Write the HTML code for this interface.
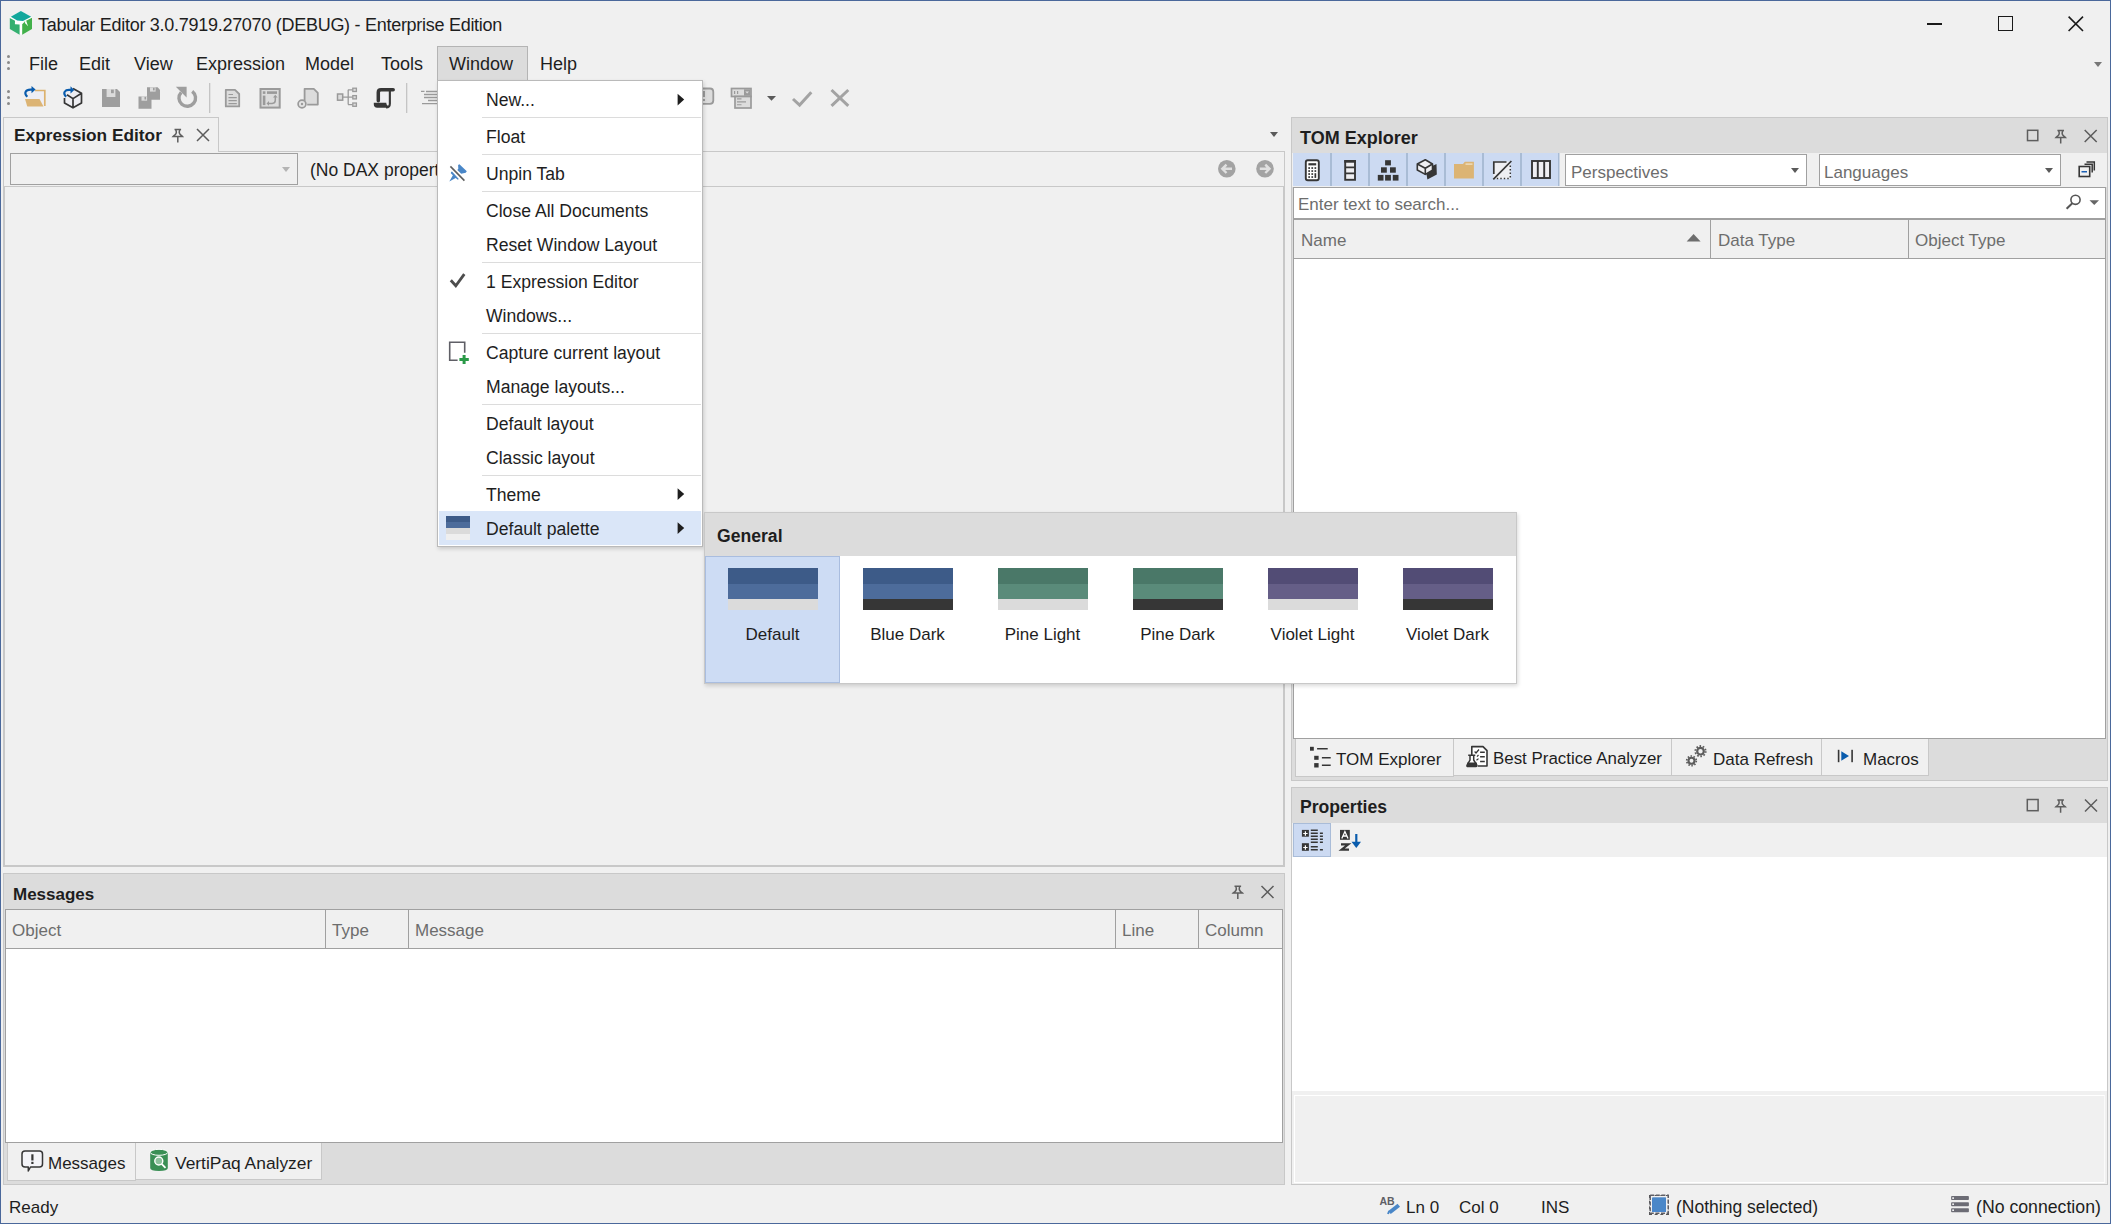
<!DOCTYPE html>
<html><head><meta charset="utf-8">
<style>
*{box-sizing:border-box;margin:0;padding:0}
html,body{width:2111px;height:1224px;overflow:hidden;background:#f0f0f0}
body{font-family:"Liberation Sans",sans-serif;font-size:17px;color:#1e1e1e;position:relative}
.a{position:absolute}
.t{position:absolute;white-space:nowrap;line-height:1}
.b{font-weight:bold}
.g{color:#6d6d6d}
svg{position:absolute;overflow:visible}
.sep{position:absolute;height:1px;background:#dcdcdc}
.mi{position:absolute;left:486px;font-size:17.6px;white-space:nowrap;line-height:1}
.arr{position:absolute;width:0;height:0;border-left:4.5px solid transparent;border-right:4.5px solid transparent;border-top:5px solid #5a5a5a}
.sw{position:absolute;top:568px;width:90px;height:42px}
.sw div{position:absolute;left:0;width:90px}
.pl{position:absolute;top:626px;width:135px;text-align:center;white-space:nowrap;line-height:1;font-size:17px}
.tab{position:absolute;background:#f0f0f0;border-right:1px solid #c8c8c8;border-bottom:1px solid #c8c8c8}
</style></head><body>
<!-- window border -->
<div class="a" style="left:0;top:0;width:2111px;height:1224px;border:1px solid #4a689b"></div>

<!-- ===== title bar ===== -->
<svg style="left:0;top:0" width="40" height="40" viewBox="0 0 40 40">
  <polygon points="20.9,10.9 31.2,16.7 32,17.8 32,28.9 21,34.7 9.8,28.9 9.8,18 10.8,16.7" fill="#fff"/>
  <polygon points="20.9,10.9 31.2,16.7 23,20.9 17.2,20.6 10.8,16.7" fill="#13a89c"/>
  <polygon points="9.8,18 15,20.7 14.9,24.3 19.6,24.4 19.6,34.7 9.8,28.9" fill="#34b070"/>
  <polygon points="22.2,24.3 25.2,21.3 32,17.8 32,28.9 22.2,34.7" fill="#41b04a"/>
  <polygon points="24.4,21.2 26.3,21 28,26.3 25.3,23.2" fill="#fff"/>
</svg>
<div class="t" style="left:38px;top:16px;font-size:18px;letter-spacing:-0.28px">Tabular Editor 3.0.7919.27070 (DEBUG) - Enterprise Edition</div>
<div class="a" style="left:1927px;top:23px;width:15px;height:2px;background:#1a1a1a"></div>
<div class="a" style="left:1998px;top:16px;width:15px;height:15px;border:1.6px solid #1a1a1a"></div>
<svg style="left:2068px;top:16px" width="16" height="16" viewBox="0 0 16 16"><path d="M0.6 0.6L15 15M15 0.6L0.6 15" stroke="#1a1a1a" stroke-width="1.6"/></svg>

<!-- ===== menu bar ===== -->
<svg style="left:7px;top:55px" width="4" height="16"><circle cx="1.5" cy="1.5" r="1.5" fill="#8a8a8a"/><circle cx="1.5" cy="7.5" r="1.5" fill="#8a8a8a"/><circle cx="1.5" cy="13.5" r="1.5" fill="#8a8a8a"/></svg>
<div class="a" style="left:437px;top:46px;width:91px;height:35px;background:#dcdcdc;border:1px solid #b4b4b4;border-bottom:none"></div>
<div class="t" style="left:29px;top:55px;font-size:18px">File</div>
<div class="t" style="left:79px;top:55px;font-size:18px">Edit</div>
<div class="t" style="left:134px;top:55px;font-size:18px">View</div>
<div class="t" style="left:196px;top:55px;font-size:18px">Expression</div>
<div class="t" style="left:305px;top:55px;font-size:18px">Model</div>
<div class="t" style="left:381px;top:55px;font-size:18px">Tools</div>
<div class="t" style="left:449px;top:55px;font-size:18px">Window</div>
<div class="t" style="left:540px;top:55px;font-size:18px">Help</div>
<div class="arr" style="left:2093.5px;top:62px;border-top-color:#777"></div>

<!-- ===== toolbar ===== -->
<svg style="left:7px;top:90px" width="4" height="16"><circle cx="1.5" cy="1.5" r="1.5" fill="#8a8a8a"/><circle cx="1.5" cy="7.5" r="1.5" fill="#8a8a8a"/><circle cx="1.5" cy="13.5" r="1.5" fill="#8a8a8a"/></svg>
<div id="toolbar"></div>

<!-- ===== doc area ===== -->
<div class="a" style="left:3px;top:117px;width:216px;height:35px;border:1px solid #c8c8c8;border-bottom:none;background:#f0f0f0"></div>
<div class="a" style="left:218px;top:151px;width:1067px;height:1px;background:#c8c8c8"></div>
<div class="a" style="left:3px;top:151px;width:1282px;height:716px;border:1px solid #c8c8c8;border-top:none"></div>
<div class="t b" style="left:14px;top:127px;font-size:17.3px">Expression Editor</div>
<div class="arr" style="left:1269.5px;top:132px"></div>
<div class="a" style="left:10px;top:153px;width:288px;height:32px;border:1px solid #a0a0a0"></div>
<div class="arr" style="left:281.5px;top:167px;border-top-color:#b4b4b4"></div>
<div class="a" style="left:4px;top:186px;width:1280px;height:680px;border:1px solid #c8c8c8"></div>
<div class="t" style="left:310px;top:162px;font-size:17.5px">(No DAX property selected)</div>

<!-- ===== messages panel ===== -->
<div class="a" style="left:3px;top:873px;width:1282px;height:312px;border:1px solid #c8c8c8;background:#dcdcdc"></div>
<div class="t b" style="left:13px;top:886px">Messages</div>
<div class="a" style="left:5px;top:909px;width:1278px;height:234px;border:1px solid #a0a0a0;background:#fff"></div>
<div class="a" style="left:6px;top:910px;width:1276px;height:39px;background:#f0f0f0;border-bottom:1px solid #a0a0a0"></div>
<div class="a" style="left:325px;top:910px;width:1px;height:38px;background:#a0a0a0"></div>
<div class="a" style="left:408px;top:910px;width:1px;height:38px;background:#a0a0a0"></div>
<div class="a" style="left:1115px;top:910px;width:1px;height:38px;background:#a0a0a0"></div>
<div class="a" style="left:1198px;top:910px;width:1px;height:38px;background:#a0a0a0"></div>
<div class="t g" style="left:12px;top:922px">Object</div>
<div class="t g" style="left:332px;top:922px">Type</div>
<div class="t g" style="left:415px;top:922px">Message</div>
<div class="t g" style="left:1122px;top:922px">Line</div>
<div class="t g" style="left:1205px;top:922px">Column</div>
<div class="tab" style="left:7px;top:1143px;width:129px;height:38px;border-left:1px solid #c8c8c8"></div>
<div class="tab" style="left:136px;top:1143px;width:186px;height:37px"></div>
<div class="t" style="left:48px;top:1155px">Messages</div>
<div class="t" style="left:175px;top:1155px;font-size:17.4px">VertiPaq Analyzer</div>

<!-- ===== TOM explorer panel ===== -->
<div class="a" style="left:1291px;top:117px;width:817px;height:664px;border:1px solid #c8c8c8;background:#dcdcdc"></div>
<div class="t b" style="left:1300px;top:129px;font-size:18px">TOM Explorer</div>
<div class="a" style="left:1292px;top:153px;width:815px;height:34px;background:#f0f0f0"></div>
<div class="a" style="left:1293px;top:153px;width:266px;height:33px;background:#ccdaf2"></div>
<div class="a" style="left:1565px;top:154px;width:242px;height:32px;border:1px solid #a0a0a0;background:#fff"></div>
<div class="t g" style="left:1571px;top:164px">Perspectives</div>
<div class="arr" style="left:1790.5px;top:168px"></div>
<div class="a" style="left:1819px;top:154px;width:242px;height:32px;border:1px solid #a0a0a0;background:#fff"></div>
<div class="t g" style="left:1824px;top:164px">Languages</div>
<div class="arr" style="left:2044.5px;top:168px"></div>
<div class="a" style="left:1293px;top:187px;width:813px;height:552px;border:1px solid #a0a0a0;background:#fff"></div>
<div class="t g" style="left:1298px;top:196px">Enter text to search...</div>
<div class="a" style="left:1294px;top:218px;width:811px;height:41px;background:#f0f0f0;border-top:2px solid #a0a0a0;border-bottom:1px solid #a0a0a0"></div>
<div class="a" style="left:1710px;top:219px;width:1px;height:39px;background:#a0a0a0"></div>
<div class="a" style="left:1908px;top:219px;width:1px;height:39px;background:#a0a0a0"></div>
<div class="t g" style="left:1301px;top:232px">Name</div>
<div class="t g" style="left:1718px;top:232px">Data Type</div>
<div class="t g" style="left:1915px;top:232px">Object Type</div>
<div class="tab" style="left:1295px;top:739px;width:159px;height:38px;border-left:1px solid #c8c8c8"></div>
<div class="tab" style="left:1454px;top:739px;width:218px;height:37px"></div>
<div class="tab" style="left:1672px;top:739px;width:150px;height:37px"></div>
<div class="tab" style="left:1822px;top:739px;width:107px;height:37px"></div>
<div class="t" style="left:1336px;top:751px">TOM Explorer</div>
<div class="t" style="left:1493px;top:751px;font-size:16.9px">Best Practice Analyzer</div>
<div class="t" style="left:1713px;top:751px">Data Refresh</div>
<div class="t" style="left:1863px;top:751px">Macros</div>

<!-- ===== properties panel ===== -->
<div class="a" style="left:1291px;top:787px;width:817px;height:398px;border:1px solid #c8c8c8;background:#dcdcdc"></div>
<div class="t b" style="left:1300px;top:799px;font-size:17.6px">Properties</div>
<div class="a" style="left:1292px;top:823px;width:815px;height:34px;background:#f0f0f0"></div>
<div class="a" style="left:1293px;top:823px;width:38px;height:34px;background:#ccdaf2;border:1px solid #a9bcd8"></div>
<div class="a" style="left:1292px;top:857px;width:815px;height:234px;background:#fff"></div>
<div class="a" style="left:1292px;top:1091px;width:815px;height:93px;background:#f0f0f0"></div>
<div class="a" style="left:1294px;top:1095px;width:811px;height:88px;border:1px solid #fff;border-right-color:#fafafa"></div>

<!-- ===== status bar ===== -->
<div class="t" style="left:9px;top:1199px">Ready</div>
<div class="t" style="left:1406px;top:1199px">Ln 0</div>
<div class="t" style="left:1459px;top:1199px">Col 0</div>
<div class="t" style="left:1541px;top:1199px">INS</div>
<div class="a" style="left:1649px;top:1195px;width:20px;height:20px;border:1px dashed #555"></div>
<div class="a" style="left:1652px;top:1198px;width:14px;height:14px;background:#4a88d0"></div>
<div class="t" style="left:1676px;top:1199px;font-size:17.5px">(Nothing selected)</div>
<div class="t" style="left:1976px;top:1199px;font-size:17.7px">(No connection)</div>

<!-- ===== base icons ===== -->
<svg style="left:0;top:0" width="2111" height="1224" viewBox="0 0 2111 1224">
 <defs>
  <path id="pin" d="M2 0.75H8.6M3.1 0.75Q4.9 4 2.4 6.1Q1.1 7 0.6 7.6H10Q9.5 7 8.2 6.1Q5.7 4 7.5 0.75M5.3 7.6V13.6" fill="none" stroke-width="1.5"/>
  <path id="xx" d="M0.5 0.5L12.5 12.5M12.5 0.5L0.5 12.5" fill="none" stroke-width="1.5"/>
 </defs>
 <!-- toolbar: open folder -->
 <rect x="29" y="90.5" width="16" height="15.5" fill="#eeeef4"/>
 <path d="M35 90.5H44.8V106" fill="none" stroke="#dcb26f" stroke-width="1.7"/>
 <polygon points="25,99 39.5,99 43.5,106.6 27.3,106.6" fill="#dcb474"/>
 <path d="M27.3 96.8C23.5 93 25.5 89.3 31 89.6H32.5" fill="none" stroke="#0a5cad" stroke-width="2.1"/>
 <polygon points="31.5,86 35.6,89.6 31.5,93.2" fill="#0a5cad"/>
 <!-- open model cube -->
 <polygon points="73,88.5 81.5,93.3 81.5,103 73,107.8 64.5,103 64.5,93.3" fill="#eeeef2"/>
 <path d="M73 88.6L81.5 93.3V103L73 107.8L64.5 103V98M67 94.8L73 98.6L81.5 93.3M73 98.6V107.8" fill="none" stroke="#363636" stroke-width="1.7" stroke-linejoin="round"/>
 <path d="M66.2 96.8C62.3 93 64.8 89.5 70 89.9H71.5" fill="none" stroke="#0a5cad" stroke-width="2.1"/>
 <polygon points="70.5,86.3 74.3,89.9 70.5,93.5" fill="#0a5cad"/>
 <!-- save -->
 <path d="M102 89H117L120 92V107H102Z" fill="#9e9e9e"/>
 <rect x="106.6" y="89" width="8.8" height="8" fill="#dcdcdc"/>
 <rect x="111" y="89.6" width="2.8" height="3.6" fill="#9e9e9e"/>
 <!-- save all -->
 <path d="M147 87.3H157.6L160 89.7V99.8H147Z" fill="#9e9e9e"/>
 <rect x="150" y="87.3" width="5.6" height="4.3" fill="#dcdcdc"/><rect x="153" y="87.8" width="1.6" height="2.6" fill="#9e9e9e"/>
 <path d="M138.5 96.4H149L151.5 98.9V108.8H138.5Z" fill="#9e9e9e" stroke="#f0f0f0" stroke-width="0"/>
 <rect x="141.5" y="96.4" width="5.6" height="4.3" fill="#dcdcdc"/><rect x="144.5" y="96.9" width="1.6" height="2.6" fill="#9e9e9e"/>
 <!-- refresh -->
 <path d="M192.2 91.3A8.3 8.3 0 1 1 181.2 92.3" fill="none" stroke="#9e9e9e" stroke-width="3.4"/>
 <polygon points="175.8,86.8 186.6,86.8 186.6,97.6" fill="#9e9e9e"/>
 <rect x="209" y="83" width="1.3" height="30" fill="#c4c4c4"/>
 <!-- document -->
 <path d="M225.8 89.8H235L239.2 94V106.4H225.8Z" fill="#dcdcdc" stroke="#9a9a9a" stroke-width="1.8" stroke-linejoin="round"/>
 <path d="M228.5 94.5H233M228.5 97.6H236.8M228.5 100.6H236.8M228.5 103.6H236.8" stroke="#9a9a9a" stroke-width="1.1"/>
 <!-- table sync -->
 <rect x="260.5" y="89" width="19.2" height="18.6" fill="#dcdcdc" stroke="#9a9a9a" stroke-width="2"/>
 <rect x="262.8" y="91.3" width="2.6" height="2.6" fill="#9a9a9a"/><rect x="267" y="91.3" width="10" height="2.6" fill="#9a9a9a"/><rect x="262.8" y="95.6" width="2.6" height="9.5" fill="#9a9a9a"/>
 <path d="M268.5 103.4H272.2Q275.3 103.4 275.3 100.3V97" fill="none" stroke="#9a9a9a" stroke-width="1.5"/>
 <polygon points="273,97.5 275.3,94.8 277.6,97.5" fill="#9a9a9a"/><polygon points="269,101 266.5,103.4 269,105.8" fill="#9a9a9a"/>
 <!-- doc with circle -->
 <path d="M304.6 101V88.8H313.8L317.8 92.8V104.6H307.2" fill="#dcdcdc" stroke="#9a9a9a" stroke-width="1.8" stroke-linejoin="round"/>
 <circle cx="302" cy="104" r="3.9" fill="#e4e4e4" stroke="#9a9a9a" stroke-width="1.7"/><circle cx="302" cy="104" r="1.2" fill="#9a9a9a"/>
 <!-- hierarchy -->
 <rect x="337.5" y="94" width="5.2" height="6.2" fill="#dcdcdc" stroke="#9a9a9a" stroke-width="1.5"/>
 <path d="M342.7 97.1H348M348.2 89.8V104.6M348 89.8H352.5M348 97.2H352.5M348 104.6H352.5" stroke="#9a9a9a" stroke-width="1.3" fill="none"/>
 <rect x="352.8" y="88.2" width="3.6" height="3.3" fill="#dcdcdc" stroke="#9a9a9a" stroke-width="1.3"/>
 <rect x="352.8" y="95.6" width="3.6" height="3.3" fill="#dcdcdc" stroke="#9a9a9a" stroke-width="1.3"/>
 <rect x="352.8" y="103" width="3.6" height="3.3" fill="#dcdcdc" stroke="#9a9a9a" stroke-width="1.3"/>
 <!-- script -->
 <rect x="379.9" y="91.2" width="9.2" height="12" fill="#eeeef2"/>
 <path d="M378.3 100.7V92.3Q378.3 89.75 381 89.75H393.2" fill="none" stroke="#363636" stroke-width="3.5" stroke-linecap="round"/>
 <path d="M389.85 90.5V103.8Q389.85 107.4 386 107.5" fill="none" stroke="#363636" stroke-width="2.1"/>
 <path d="M373.8 102.8H386.3Q386.3 105.9 389 105.9Q388.6 107.7 386 107.7H377.2Q373.8 107.7 373.8 104.3Z" fill="#363636"/>
 <rect x="406" y="83" width="1.3" height="30" fill="#c4c4c4"/>
 <!-- align -->
 <path d="M421 91.3H424.5M426 91.5H437M424 94.5H437M424 97.5H437M428 100.5H437M422 103.6H437" stroke="#9a9a9a" stroke-width="1.3"/>
 <!-- right of menu: bubble partial -->
 <path d="M700 88.5H710Q713.3 88.5 713.3 92V100.5Q713.3 103.8 710 103.8H700" fill="#dcdcdc" stroke="#9a9a9a" stroke-width="1.8"/>
 <rect x="703" y="91" width="2" height="6" fill="#9a9a9a"/><rect x="703" y="99" width="2" height="2" fill="#9a9a9a"/>
 <!-- form icon -->
 <rect x="731.5" y="88.5" width="19.5" height="8" fill="#dcdcdc" stroke="#9a9a9a" stroke-width="1.7"/>
 <rect x="744" y="89.3" width="6.2" height="6.4" fill="#9a9a9a"/><polygon points="745.3,91.5 749,91.5 747.15,93.6" fill="#dcdcdc"/>
 <rect x="734" y="91" width="1.2" height="3" fill="#9a9a9a"/><rect x="737" y="91" width="1.2" height="3" fill="#9a9a9a"/>
 <rect x="735" y="96.5" width="16" height="11.5" fill="#dcdcdc" stroke="#9a9a9a" stroke-width="1.7"/>
 <path d="M737 98.9H741.5M737 101.9H746M737 104.7H741.5" stroke="#9a9a9a" stroke-width="1.1"/>
 <polygon points="767,96 776,96 771.5,100.8" fill="#5a5a5a"/>
 <polyline points="793,99 799.6,105.1 811.3,92.2" fill="none" stroke="#a3a3a3" stroke-width="3"/>
 <path d="M831.5 90L848.3 105.8M848.3 90L831.5 105.8" stroke="#a3a3a3" stroke-width="3"/>

 <!-- doc tab pin/close -->
 <use href="#pin" x="172.5" y="128.8" stroke="#5e5e5e"/>
 <use href="#xx" x="196.5" y="128.5" stroke="#5c5c5c"/>
 <!-- nav arrows -->
 <circle cx="1226.8" cy="168.8" r="8.8" fill="#a3a3a3"/>
 <path d="M1232 168.8H1223M1226.5 164.6L1222.3 168.8L1226.5 173" fill="none" stroke="#e0e0e0" stroke-width="2.4"/>
 <circle cx="1265" cy="168.8" r="8.8" fill="#a3a3a3"/>
 <path d="M1259.8 168.8H1268.8M1265.3 164.6L1269.5 168.8L1265.3 173" fill="none" stroke="#e0e0e0" stroke-width="2.4"/>

 <!-- messages header icons -->
 <use href="#pin" x="1232.5" y="885.5" stroke="#5e5e5e"/>
 <use href="#xx" x="1261" y="885.5" stroke="#5c5c5c"/>
 <!-- messages tab icons -->
 <path d="M25 1151H39.5Q42.5 1151 42.5 1154V1164Q42.5 1167 39.5 1167H30.5L28.3 1171V1167H25Q22 1167 22 1164V1154Q22 1151 25 1151Z" fill="#f4f4f8" stroke="#363636" stroke-width="1.5" stroke-linejoin="round"/>
 <rect x="31.3" y="1154.3" width="2.2" height="6.2" fill="#363636"/><rect x="31.3" y="1161.8" width="2.2" height="2.2" fill="#363636"/>
 <path d="M150.2 1152V1168Q150.2 1171 159 1171Q167.8 1171 167.8 1168V1152Z" fill="#3a8f55"/>
 <ellipse cx="159" cy="1152.3" rx="8.8" ry="3" fill="#3a8f55" stroke="#fff" stroke-width="1"/>
 <circle cx="158.8" cy="1161" r="4" fill="#8cc09c" stroke="#fff" stroke-width="1.4"/>
 <path d="M161.6 1163.8L165.5 1167.8" stroke="#fff" stroke-width="1.8"/>

 <!-- TOM explorer header icons -->
 <rect x="2027.5" y="130.3" width="10.3" height="10.3" fill="none" stroke="#5e5e5e" stroke-width="1.5"/>
 <use href="#pin" x="2055.4" y="129.8" stroke="#5e5e5e"/>
 <use href="#xx" x="2084.2" y="129.5" stroke="#5c5c5c"/>
 <!-- TOM toolbar separators -->
 <rect x="1330" y="153" width="2" height="33" fill="#a9bcd5"/>
 <rect x="1368" y="153" width="2" height="33" fill="#a9bcd5"/>
 <rect x="1406" y="153" width="2" height="33" fill="#a9bcd5"/>
 <rect x="1444" y="153" width="2" height="33" fill="#a9bcd5"/>
 <rect x="1482" y="153" width="2" height="33" fill="#a9bcd5"/>
 <rect x="1520" y="153" width="2" height="33" fill="#a9bcd5"/>
 <rect x="1558" y="153" width="1.5" height="33" fill="#a9bcd5"/>
 <!-- calculator -->
 <rect x="1305.8" y="160.2" width="13" height="20" rx="2" fill="#fff" stroke="#363636" stroke-width="1.9"/>
 <rect x="1308.4" y="163.2" width="7.8" height="2.2" fill="#363636"/>
 <g fill="#363636"><rect x="1308.3" y="167.2" width="1.7" height="1.7"/><rect x="1311.4" y="167.2" width="1.7" height="1.7"/><rect x="1314.5" y="167.2" width="1.7" height="1.7"/>
 <rect x="1308.3" y="170.2" width="1.7" height="1.7"/><rect x="1311.4" y="170.2" width="1.7" height="1.7"/><rect x="1314.5" y="170.2" width="1.7" height="1.7"/>
 <rect x="1308.3" y="173.2" width="1.7" height="1.7"/><rect x="1311.4" y="173.2" width="1.7" height="1.7"/><rect x="1314.5" y="173.2" width="1.7" height="4.7"/>
 <rect x="1308.3" y="176.2" width="1.7" height="1.7"/><rect x="1311.4" y="176.2" width="1.7" height="1.7"/></g>
 <!-- table -->
 <rect x="1345.2" y="161" width="9.8" height="18.8" fill="#efeff2" stroke="#363636" stroke-width="1.9"/>
 <rect x="1344.3" y="160.1" width="11.6" height="2.6" fill="#363636"/>
 <path d="M1345 167.3H1355M1345 173.3H1355" stroke="#363636" stroke-width="1.7"/>
 <!-- pyramid -->
 <g fill="#363636"><rect x="1385.1" y="160.2" width="5.8" height="5.2"/><rect x="1381" y="167.3" width="5.8" height="5.4"/><rect x="1390" y="167.3" width="5.8" height="5.4"/>
 <rect x="1377.8" y="174.9" width="5.7" height="5.7"/><rect x="1385.1" y="174.9" width="5.8" height="5.7"/><rect x="1392.8" y="174.9" width="5.7" height="5.7"/></g>
 <!-- cubes -->
 <polygon points="1428,168 1436.5,164 1436.8,174.4 1427.4,179.5 1426,171" fill="#363636"/>
 <polygon points="1425.3,159.8 1432.5,164 1432.5,170.2 1425.3,174.4 1417.3,170 1417.3,164" fill="#efeff2" stroke="#363636" stroke-width="1.6" stroke-linejoin="round"/>
 <path d="M1417.3 164L1425.3 168.3L1432.5 164M1425.3 168.3V174.4" fill="none" stroke="#363636" stroke-width="1.6"/>
 <!-- folder -->
 <path d="M1454 164H1463L1464.8 161.8H1473.9V178.4H1454Z" fill="#dcb474"/>
 <rect x="1465.5" y="163.4" width="7" height="1.4" fill="#f0e0c0"/>
 <!-- diagonal -->
 <rect x="1493.5" y="161.5" width="17" height="17.5" fill="#efeff2"/>
 <path d="M1493.8 174V162H1506.5" fill="none" stroke="#363636" stroke-width="1.7"/>
 <path d="M1493.3 179.3L1511.4 161" stroke="#363636" stroke-width="1.7"/>
 <path d="M1510.3 165.5V179M1496.8 178.4H1510.5" stroke="#363636" stroke-width="1.5" stroke-dasharray="1.4 2.1"/>
 <!-- columns -->
 <rect x="1532" y="161" width="18" height="17" fill="#efeff2" stroke="#363636" stroke-width="1.9"/>
 <path d="M1537.8 161V178M1544.2 161V178" stroke="#363636" stroke-width="1.9"/>
 <!-- combo arrows already via div; restore windows icon -->
 <path d="M2086.5 162H2094.3V170.5M2084.5 164.2H2092.2V172.5" fill="none" stroke="#363636" stroke-width="1.5"/>
 <rect x="2079.2" y="166.5" width="10.5" height="10" fill="#f0f0f0" stroke="#363636" stroke-width="1.6"/>
 <rect x="2081.5" y="171" width="5.5" height="1.5" fill="#1a5fb4"/>
 <!-- search -->
 <circle cx="2075.5" cy="199.8" r="4.6" fill="none" stroke="#555" stroke-width="1.6"/>
 <path d="M2072.3 203.2L2066.6 208.8" stroke="#555" stroke-width="2"/>
 <polygon points="2089.5,200.3 2099,200.3 2094.25,205" fill="#666"/>
 <polygon points="1686.7,241.5 1700.6,241.5 1693.6,234" fill="#6d6d6d"/>

 <!-- tab strip icons -->
 <g fill="#363636"><rect x="1310" y="746.8" width="3.8" height="3.9"/><rect x="1314.2" y="755.8" width="4.4" height="4"/><rect x="1314.2" y="763.1" width="4.4" height="4.4"/></g>
 <path d="M1317.1 748.7H1327.7M1321.9 757.8H1330.7M1321.9 765.3H1330.7" stroke="#363636" stroke-width="1.6"/>
 <path d="M1471.8 755V746.6H1483L1487 750.6V766H1478" fill="#fff" stroke="#363636" stroke-width="1.6" stroke-linejoin="round"/>
 <path d="M1480.1 752.3H1484.8M1480.1 756.7H1484.8M1480.1 761.4H1484.8" stroke="#363636" stroke-width="1.5"/>
 <path d="M1474.6 751.5L1476 753L1479 749.5M1477 756.6L1478.5 755M1476.5 760.3L1478.5 758.6" fill="none" stroke="#363636" stroke-width="1.2"/>
 <path d="M1468.2 755.3H1475.3M1470 755.3V760L1467 765.2Q1466.6 766.5 1468 766.5H1476Q1477.3 766.5 1476.8 765.2L1473.7 760V755.3" fill="#fff" stroke="#363636" stroke-width="1.5"/>
 <path d="M1467.3 762.5H1476.8L1477.1 765.5Q1477 766.6 1476 766.6H1468Q1466.9 766.6 1467 765.5Z" fill="#363636"/>
 <g fill="none" stroke="#5c5c5c">
  <circle cx="1700.5" cy="751.2" r="3.3" stroke-width="2.2"/>
  <circle cx="1700.5" cy="751.2" r="5.2" stroke-width="1.8" stroke-dasharray="1.6 1.67"/>
  <circle cx="1691.5" cy="760.8" r="3" stroke-width="2.1"/>
  <circle cx="1691.5" cy="760.8" r="4.8" stroke-width="1.7" stroke-dasharray="1.5 1.51"/>
 </g>
 <rect x="1837.8" y="749.8" width="1.6" height="12.4" fill="#363636"/>
 <polygon points="1841.3,751.2 1849,756 1841.3,760.8" fill="#0a5cad"/>
 <rect x="1851.3" y="749.8" width="1.6" height="12.4" fill="#363636"/>

 <!-- properties header icons -->
 <rect x="2027.3" y="799.5" width="10.8" height="11.2" fill="none" stroke="#5e5e5e" stroke-width="1.5"/>
 <use href="#pin" x="2055.3" y="799.2" stroke="#5e5e5e"/>
 <use href="#xx" x="2084.5" y="799" stroke="#5c5c5c"/>
 <!-- properties toolbar -->
 <g fill="#363636"><rect x="1301.9" y="829.9" width="7" height="6.8"/><rect x="1301.9" y="843.2" width="7" height="7.6"/></g>
 <path d="M1303.2 833.5H1307.6M1305.4 831.3V835.7M1303.2 847.5H1307.6M1305.4 845.3V849.7" stroke="#fff" stroke-width="1.2"/>
 <path d="M1310.8 830.3H1317.8M1310.8 833.3H1317.8M1310.8 836.3H1317.8M1310.8 839.3H1317.8M1310.8 842.3H1317.8M1310.8 846.8H1317.8M1310.8 849.8H1317.8M1319.9 833.3H1322.9M1319.9 836.3H1322.9M1319.9 839.3H1322.9M1319.9 842.3H1322.9M1319.9 849.8H1322.9" stroke="#363636" stroke-width="1.4"/>
 <rect x="1340" y="829.9" width="9.8" height="9.9" fill="#363636"/>
 <path d="M1341.8 838.5L1344.9 831.5L1348 838.5M1342.9 836H1346.9" fill="none" stroke="#fff" stroke-width="1.3"/>
 <path d="M1341 844.3H1348.3L1341.6 849.7H1349" fill="none" stroke="#363636" stroke-width="2.2"/>
 <path d="M1356.3 834V845" stroke="#0a5cad" stroke-width="2.2"/>
 <polygon points="1351.5,841.8 1361,841.8 1356.3,848" fill="#0a5cad"/>

 <!-- status bar icons -->
 <text x="1379.5" y="1205" font-family="Liberation Sans" font-weight="bold" font-size="10.5" fill="#5f5f66">AB</text>
 <path d="M1389.5 1212.5L1398.8 1205.2" stroke="#4a87c8" stroke-width="4"/>
 <path d="M1388 1214L1389.2 1211" stroke="#4a87c8" stroke-width="2"/>
 <rect x="1650.2" y="1195.2" width="18" height="18" fill="none" stroke="#5f5f66" stroke-width="1.5" stroke-dasharray="4 1.6"/>
 <rect x="1652.3" y="1197.3" width="13.6" height="13.6" fill="#4a87c8"/>
 <g fill="#6c6c75"><rect x="1951.1" y="1196.1" width="17.8" height="4" rx="0.8"/><rect x="1951.1" y="1202.2" width="17.8" height="4" rx="0.8"/><rect x="1951.1" y="1208.2" width="17.8" height="4" rx="0.8"/></g>
 <g fill="#fff"><rect x="1952.3" y="1197.3" width="1.6" height="1.6"/><rect x="1952.3" y="1203.4" width="1.6" height="1.6"/><rect x="1952.3" y="1209.4" width="1.6" height="1.6"/></g>
</svg>

<!-- ===== window menu ===== -->
<div class="a" style="left:437px;top:80px;width:266px;height:467px;background:#fff;border:1px solid #bababa;box-shadow:1px 2px 4px rgba(0,0,0,0.16)"></div>
<div class="sep" style="left:482px;top:117px;width:219px"></div>
<div class="sep" style="left:482px;top:154px;width:219px"></div>
<div class="sep" style="left:482px;top:191px;width:219px"></div>
<div class="sep" style="left:482px;top:262px;width:219px"></div>
<div class="sep" style="left:482px;top:333px;width:219px"></div>
<div class="sep" style="left:482px;top:404px;width:219px"></div>
<div class="sep" style="left:482px;top:475px;width:219px"></div>
<div class="a" style="left:439px;top:511px;width:262px;height:34px;background:#dae6f8"></div>
<div class="mi" style="top:92px">New...</div>
<div class="mi" style="top:129px">Float</div>
<div class="mi" style="top:166px">Unpin Tab</div>
<div class="mi" style="top:203px">Close All Documents</div>
<div class="mi" style="top:237px">Reset Window Layout</div>
<div class="mi" style="top:274px">1 Expression Editor</div>
<div class="mi" style="top:308px">Windows...</div>
<div class="mi" style="top:345px">Capture current layout</div>
<div class="mi" style="top:379px">Manage layouts...</div>
<div class="mi" style="top:416px">Default layout</div>
<div class="mi" style="top:450px">Classic layout</div>
<div class="mi" style="top:487px">Theme</div>
<div class="mi" style="top:521px">Default palette</div>

<!-- menu icons -->
<svg style="left:0;top:0" width="2111" height="1224" viewBox="0 0 2111 1224">
 <polygon points="677.6,93.7 684.2,99.6 677.6,105.5" fill="#1e1e1e"/>
 <polygon points="677.6,488.2 684.2,494.1 677.6,500" fill="#1e1e1e"/>
 <polygon points="677.6,522.2 684.2,528.1 677.6,534" fill="#1e1e1e"/>
 <path d="M450.4 166.4L464.4 180.6" stroke="#5e5e5e" stroke-width="1.6"/>
 <polygon points="459.4,164.2 466.8,171.3 465.7,172.8 461.2,173.8 457.3,170 458.3,168.7 458.1,165.1" fill="#4a87c8"/>
 <polygon points="451.1,172 452,171.6 458.8,178.9 457.8,179.8 455.7,177.9 449.3,181.6 452.9,175.3 450.8,173.3" fill="#4a87c8"/>
 <polyline points="450.8,280.2 455.8,285.8 464.3,274.2" fill="none" stroke="#4d4d4d" stroke-width="2.8"/>
 <path d="M457.6 360.2H449.7V342.2H464.7V352.8" fill="none" stroke="#5f5f66" stroke-width="1.6"/>
 <path d="M459.4 359.5H468.8M464.1 355V364" stroke="#2a9a48" stroke-width="3"/>
 <rect x="446" y="516" width="24" height="6" fill="#3d5b88"/>
 <rect x="446" y="522" width="24" height="6" fill="#4d6c9b"/>
 <rect x="446" y="528" width="24" height="6" fill="#dbdbdb"/>
 <rect x="446" y="534" width="24" height="6" fill="#efefef"/>
</svg>

<!-- ===== palette gallery ===== -->
<div class="a" style="left:704px;top:512px;width:813px;height:172px;background:#fff;border:1px solid #c8c8c8;box-shadow:1px 2px 4px rgba(0,0,0,0.15)"></div>
<div class="a" style="left:705px;top:513px;width:811px;height:43px;background:#dcdcdc"></div>
<div class="t b" style="left:717px;top:528px;font-size:17.6px">General</div>
<div class="a" style="left:705px;top:556px;width:135px;height:127px;background:#cddcf4;border:1px solid #a9bddf"></div>
<div class="sw" style="left:728px"><div style="top:0;height:16px;background:#3d5b88"></div><div style="top:16px;height:15px;background:#4d6c9b"></div><div style="top:31px;height:11px;background:#dbdbdb"></div></div>
<div class="sw" style="left:863px"><div style="top:0;height:16px;background:#3d5b88"></div><div style="top:16px;height:15px;background:#4d6c9b"></div><div style="top:31px;height:11px;background:#363636"></div></div>
<div class="sw" style="left:998px"><div style="top:0;height:16px;background:#4a7868"></div><div style="top:16px;height:15px;background:#5a8b7a"></div><div style="top:31px;height:11px;background:#dbdbdb"></div></div>
<div class="sw" style="left:1133px"><div style="top:0;height:16px;background:#4a7868"></div><div style="top:16px;height:15px;background:#5a8b7a"></div><div style="top:31px;height:11px;background:#363636"></div></div>
<div class="sw" style="left:1268px"><div style="top:0;height:16px;background:#524c75"></div><div style="top:16px;height:15px;background:#655e87"></div><div style="top:31px;height:11px;background:#dbdbdb"></div></div>
<div class="sw" style="left:1403px"><div style="top:0;height:16px;background:#524c75"></div><div style="top:16px;height:15px;background:#655e87"></div><div style="top:31px;height:11px;background:#363636"></div></div>
<div class="pl" style="left:705px">Default</div>
<div class="pl" style="left:840px">Blue Dark</div>
<div class="pl" style="left:975px">Pine Light</div>
<div class="pl" style="left:1110px">Pine Dark</div>
<div class="pl" style="left:1245px">Violet Light</div>
<div class="pl" style="left:1380px">Violet Dark</div>

</body></html>
